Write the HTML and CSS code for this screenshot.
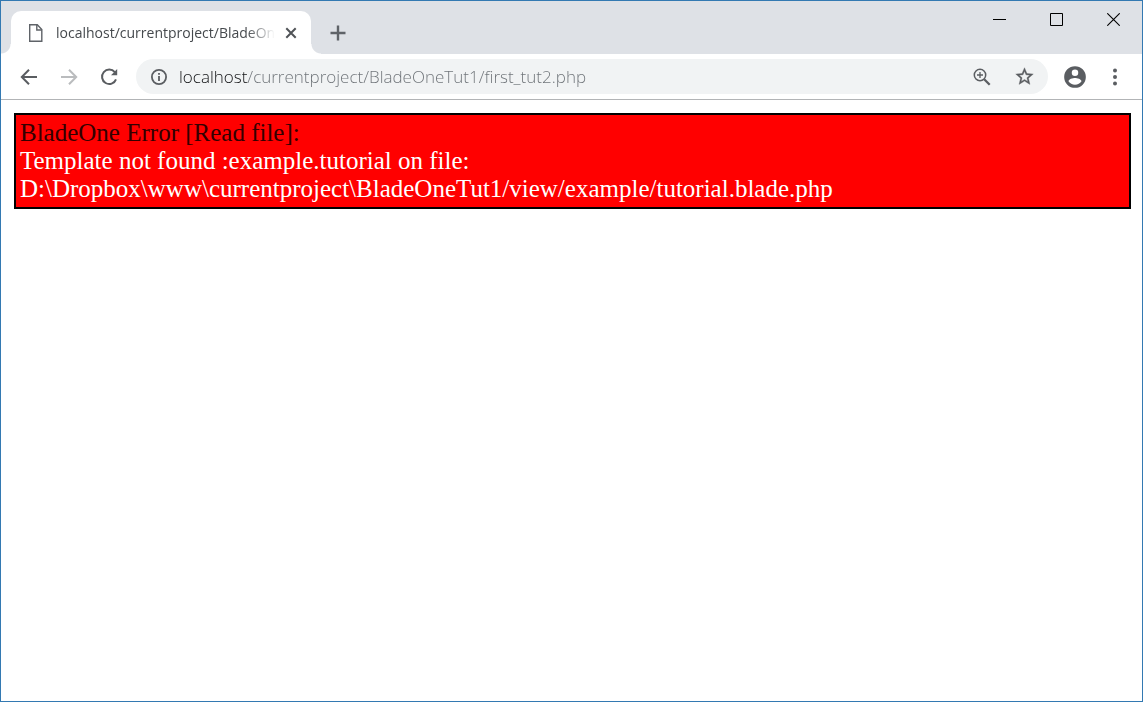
FILE: index.html
```html
<!DOCTYPE html>
<html lang="en">
<head>
<meta charset="utf-8">
<title>localhost/currentproject/BladeOneTut1/first_tut2.php</title>
<link rel="stylesheet" href="styles.css">
</head>
<body>
<div class="window">
  <header class="tab-strip">
    <div class="tab">
      <svg class="tab-icon" width="16" height="20" viewBox="0 0 16 20" fill="none" stroke="#5f6368" stroke-width="1.4"><path d="M1.7 1.7h7.6l4.5 4.8v11.8H1.700z"/><path d="M8.800 2v5h4.800"/></svg>
      <span class="tab-title">localhost/currentproject/BladeOn</span>
      <button class="tab-close" aria-label="Close tab"><svg width="12" height="12" viewBox="0 0 12 12" stroke="#505357" stroke-width="2"><path d="M1.300 1.300l9.400 9.400M10.700 1.300l-9.400 9.400"/></svg></button>
    </div>
    <button class="new-tab" aria-label="New tab"><svg width="16" height="16" viewBox="0 0 16 16" stroke="#5f6368" stroke-width="2.400"><path d="M8 .5v15M.5 8h15"/></svg></button>
    <div class="window-controls">
      <button class="window-button" aria-label="Minimize"><svg width="13" height="13" viewBox="0 0 13 13" stroke="#000"><path d="M0 6.500h13"/></svg></button>
      <button class="window-button" aria-label="Maximize"><svg width="13" height="13" viewBox="0 0 13 13" fill="none" stroke="#000"><path d="M.5.5h12v12H.5z"/></svg></button>
      <button class="window-button" aria-label="Close"><svg width="13" height="13" viewBox="0 0 13 13" stroke="#000" stroke-width="1.100"><path d="M.3.300l12.400 12.400M12.700.3L.3 12.700"/></svg></button>
    </div>
  </header>
  <nav class="toolbar">
    <button class="tool" aria-label="Back"><svg width="18" height="18" viewBox="0 0 18 18" fill="none" stroke="#5a5d61" stroke-width="2"><path d="M17 9H2.500M9 1.700L1.800 9 9 16.300"/></svg></button>
    <button class="tool" aria-label="Forward" disabled><svg width="18" height="18" viewBox="0 0 18 18" fill="none" stroke="#babcbe" stroke-width="2"><path d="M1 9h14.500M9 1.700L16.200 9 9 16.300"/></svg></button>
    <button class="tool" aria-label="Reload"><svg width="18" height="18" viewBox="0 0 18 18"><path d="M14.800 4.200A7.200 7.200 0 1 0 16 11.300" fill="none" stroke="#5a5d61" stroke-width="2"/><path d="M17.200 1v6.200H11z" fill="#5a5d61"/></svg></button>
    <div class="address-bar">
      <button class="site-info" aria-label="Site information"><svg width="18" height="18" viewBox="0 0 18 18" fill="none" stroke="#5a5d61" stroke-width="1.800"><circle cx="9" cy="9" r="7.100"/><path d="M9 8v5M9 5v1.800"/></svg></button>
      <input class="address" type="text" aria-label="Address" spellcheck="false" value="localhost/currentproject/BladeOneTut1/first_tut2.php">
      <button class="address-action" aria-label="Zoom"><svg width="18" height="18" viewBox="0 0 18 18" fill="none" stroke="#5a5d61"><circle cx="7" cy="7" r="5.700" stroke-width="1.500"/><path d="M11.200 11.200l5.500 5.500" stroke-width="2.300"/><path d="M7 4v6M4 7h6" stroke-width="1.300"/></svg></button>
      <button class="address-action" aria-label="Bookmark this page"><svg width="21" height="21" viewBox="0 0 24 24" fill="#5a5d61" stroke="#5a5d61" stroke-width=".4"><path d="M22 9.240l-7.190-.62L12 2 9.190 8.630 2 9.240l5.460 4.730L5.820 21 12 17.270 18.180 21l-1.630-7.030L22 9.240zM12 15.400l-3.760 2.270 1-4.280-3.320-2.880 4.380-.38L12 6.100l1.710 4.040 4.380.38-3.320 2.880 1 4.280L12 15.400z"/></svg></button>
    </div>
    <button class="tool" aria-label="Profile"><svg width="26" height="26" viewBox="0 0 24 24" fill="#5a5d61"><path d="M12 2a10 10 0 1 0 0 20 10 10 0 0 0 0-20zm0 3a3 3 0 1 1 0 6 3 3 0 0 1 0-6zm0 14.200a7.200 7.200 0 0 1-6-3.220c.03-1.990 4-3.080 6-3.080s5.970 1.090 6 3.080a7.200 7.200 0 0 1-6 3.220z"/></svg></button>
    <button class="tool" aria-label="Menu"><svg width="4" height="18" viewBox="0 0 4 18" fill="#5a5d61"><circle cx="2" cy="2.500" r="2"/><circle cx="2" cy="9" r="2"/><circle cx="2" cy="15.500" r="2"/></svg></button>
  </nav>
  <main class="page">
    <div class="error">
      <div class="error-title">BladeOne Error [Read file]:</div>
      <div>Template not found :example.tutorial on file:<br>D:\Dropbox\www\currentproject\BladeOneTut1/view/example/tutorial.blade.php</div>
    </div>
  </main>
</div>
</body>
</html>
```
FILE: styles.css
```css
* {
  box-sizing: border-box;
}

body {
  margin: 0;
  font-family: "Open Sans", "Noto Sans", sans-serif;
}

button {
  display: flex;
  align-items: center;
  justify-content: center;
  flex: none;
  padding: 0;
  border: 0;
  background: none;
}

svg {
  display: block;
}

.window {
  display: flex;
  flex-direction: column;
  min-height: 100vh;
  border: 1px solid #3379b2;
  background: #fff;
}

.tab-strip {
  display: flex;
  align-items: flex-end;
  height: 53px;
  padding-left: 10px;
  background: #dee1e6;
}

.tab {
  position: relative;
  display: flex;
  align-items: center;
  width: 300px;
  height: 43px;
  padding: 0 12px 0 17px;
  border-radius: 10px 10px 0 0;
  background: #fff;
}

.tab::before,
.tab::after {
  content: "";
  position: absolute;
  bottom: 0;
  width: 10px;
  height: 10px;
}

.tab::before {
  right: 100%;
  background: radial-gradient(circle at 0 0, transparent 9px, #fff 10px);
}

.tab::after {
  left: 100%;
  background: radial-gradient(circle at 100% 0, transparent 9px, #fff 10px);
}

.tab-icon {
  flex: none;
}

.tab-title {
  flex: 1;
  min-width: 0;
  margin: 0 8px 0 12px;
  overflow: hidden;
  color: #45494d;
  font-size: 14px;
  line-height: 20px;
  white-space: nowrap;
  -webkit-mask-image: linear-gradient(to left, transparent, #000 28px);
  mask-image: linear-gradient(to left, transparent, #000 28px);
}

.tab-close {
  width: 16px;
  height: 16px;
}

.new-tab {
  width: 28px;
  height: 43px;
  margin-left: 13px;
}

.window-controls {
  display: flex;
  align-self: flex-start;
  margin-left: auto;
}

.window-button {
  width: 57px;
  height: 37px;
}

.toolbar {
  display: flex;
  align-items: center;
  height: 46px;
  padding: 0 7px 0 8px;
  border-bottom: 1px solid #b2b4b6;
}

.tool {
  width: 40px;
  height: 36px;
}

.address-bar {
  display: flex;
  flex: 1;
  align-items: center;
  min-width: 0;
  height: 35px;
  margin: 0 7px;
  padding: 0 2px 0 13px;
  border-radius: 18px;
  background: #f1f3f4;
}

.site-info {
  width: 20px;
  height: 32px;
}

.address {
  flex: 1;
  min-width: 0;
  height: 32px;
  margin-left: 10px;
  padding: 0;
  border: 0;
  outline: 0;
  background: linear-gradient(to right, #111214 69px, #6c7176 69px);
  -webkit-background-clip: text;
  background-clip: text;
  color: transparent;
  caret-color: #202124;
  font: 330 17px "Open Sans", "Noto Sans", sans-serif;
}

.address-action {
  width: 43px;
  height: 32px;
}

.page {
  flex: 1;
  padding: 13px 11px 13px 13px;
}

.error {
  padding: 4px;
  border: 2px solid #000;
  background: #f00;
  color: #fff;
  font-family: "Liberation Serif", "Times New Roman", serif;
  font-size: 25px;
  line-height: 28px;
  overflow-wrap: anywhere;
}

.error-title {
  color: #300;
}
```
